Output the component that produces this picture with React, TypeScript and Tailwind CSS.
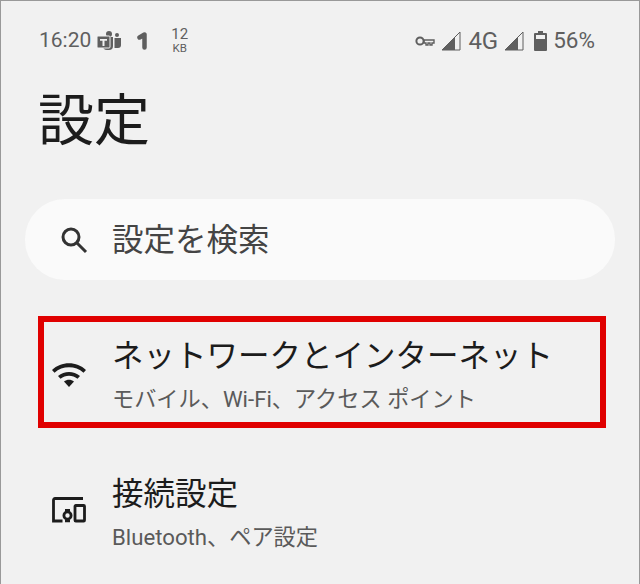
const StatusIcons = () => (
  <div className="flex items-center">
    <svg width="20" height="12" viewBox="0 0 20 12" className="mr-[6px]" fill="none" stroke="#5f5f5f" strokeWidth="2">
      <circle cx="5" cy="6" r="3.6" />
      <path d="M9 5h10v3h-2v2h-2V8h-2v2h-2V8H9z" strokeWidth="1.4" />
    </svg>
    <svg width="20" height="20" viewBox="0 0 20 20" className="mr-[7px]">
      <path d="M19 1v18H1z" fill="none" stroke="#5f5f5f" strokeWidth="1" />
      <path d="M14 6v13H1z" fill="#5f5f5f" />
    </svg>
    <span className="text-[24px] mr-[6px]">4G</span>
    <svg width="20" height="20" viewBox="0 0 20 20" className="mr-[10px]">
      <path d="M19 1v18H1z" fill="none" stroke="#5f5f5f" strokeWidth="1" />
      <path d="M14 6v13H1z" fill="#5f5f5f" />
    </svg>
    <svg width="13" height="20" viewBox="0 0 13 20" className="mr-[6px]">
      <path d="M4 0h5v2h3a1 1 0 0 1 1 1v16a1 1 0 0 1-1 1H1a1 1 0 0 1-1-1V3a1 1 0 0 1 1-1h3z" fill="#5f5f5f" />
      <rect x="2" y="4" width="9" height="4" fill="#f1f1f1" />
    </svg>
    <span className="text-[22.500px]">56%</span>
  </div>
);

const TeamsIcon = () => (
  <svg width="24" height="20" viewBox="0 0 24 20">
    <circle cx="12" cy="3" r="3" fill="#5f5f5f" />
    <circle cx="20" cy="4" r="2" fill="#5f5f5f" />
    <path d="M6 6h10v9a4 4 0 0 1-4 4H10a4 4 0 0 1-4-4z" fill="#5f5f5f" />
    <path d="M17.500 7H24v7a3 3 0 0 1-3 3h-3.500z" fill="#5f5f5f" />
    <rect x="0" y="5" width="13" height="12" rx="1" fill="#5f5f5f" stroke="#f1f1f1" strokeWidth="1" />
    <path d="M3 8h7v1.800H7.500V15h-2V9.800H3z" fill="#f1f1f1" />
  </svg>
);

const OneIcon = () => (
  <svg width="12" height="18" viewBox="0 0 12 18" fill="none" stroke="#5f5f5f" strokeWidth="4.500" strokeLinecap="round" strokeLinejoin="round">
    <path d="M2.500 5.500L7.500 2.500V15.500" />
  </svg>
);

const WifiIcon = () => (
  <svg width="34" height="26" viewBox="0 0 34 26" fill="#1c1c1c" className="mt-[4px]">
    <path d="M0 9C9 0 25 0 34 9l-2.500 2.800C23.500 4.500 10.500 4.500 2.500 11.800z" />
    <path d="M6 15c6.500-5.500 15.500-5.500 22 0l-2.500 2.800c-5-4-12-4-17 0z" />
    <path d="M12 20.500c3-2.300 7-2.300 10 0L17 26z" />
  </svg>
);

const DevicesIcon = () => (
  <svg width="34" height="26" viewBox="0 0 34 26" fill="none" stroke="#1c1c1c" strokeWidth="2.800">
    <path d="M31 1.500H3a1.500 1.500 0 0 0-1.500 1.500v21h9" />
    <rect x="23" y="8.500" width="9.500" height="15.500" rx="0.800" />
    <circle cx="15.500" cy="18.500" r="3.600" />
    <path d="M13 13.500h5M13 23.800h5" />
  </svg>
);

const SearchIcon = () => (
  <svg width="30" height="30" viewBox="0 0 30 30" fill="none" stroke="#333" strokeWidth="3">
    <circle cx="12" cy="12" r="8" />
    <path d="M18 18l9 9" />
  </svg>
);

const Row = ({ icon, title, sub }: { icon: React.ReactNode; title: string; sub: string }) => (
  <div className="flex items-center">
    <div className="w-[34px] mr-[26px] flex justify-center">{icon}</div>
    <div className="flex flex-col pt-[8px]">
      <div className="text-[31.500px] leading-[46px] text-[#1c1c1c] whitespace-nowrap">{title}</div>
      <div className="text-[22.200px] leading-[38px] text-[#5a5a5a] whitespace-nowrap">{sub}</div>
    </div>
  </div>
);

export default function App() {
  return (
    <div
      className="w-[640px] h-[584px] overflow-hidden bg-[#f1f1f1] border-x border-t border-[#999] flex flex-col"
      style={{ fontFamily: '"Roboto", "Noto Sans CJK JP", sans-serif' }}
    >
      {/* status bar */}
      <div className="flex items-center justify-between pl-[38px] pr-[44px] pt-[26px] h-[54px] text-[#5f5f5f]">
        <div className="flex items-center">
          <span className="text-[21px] mr-[6px]">16:20</span>
          <TeamsIcon />
          <div className="ml-[16px] mr-[22px]">
            <OneIcon />
          </div>
          <div className="flex flex-col items-center">
            <span className="text-[15px] leading-[15px]">12</span>
            <span className="text-[11.500px] leading-[13px]">KB</span>
          </div>
        </div>
        <StatusIcons />
      </div>

      <h1 className="text-[56px] leading-[64px] font-normal text-[#1c1c1c] pl-[37px] mt-[34px]">設定</h1>

      {/* search */}
      <div className="mx-[24px] mt-[46px] h-[81px] rounded-[40px] bg-[#fafafa] flex items-center pl-[34px] shrink-0">
        <SearchIcon />
        <span className="ml-[23px] pt-[3px] text-[31.500px] text-[#444]">設定を検索</span>
      </div>

      {/* highlighted row */}
      <div className="ml-[37px] w-[568px] mt-[36px] h-[112px] border-[6px] border-[#e00000] pl-[8px] flex items-center shrink-0">
        <Row icon={<WifiIcon />} title="ネットワークとインターネット" sub="モバイル、Wi-Fi、アクセス ポイント" />
      </div>

      <div className="pl-[51px] mt-[36px]">
        <Row icon={<DevicesIcon />} title="接続設定" sub="Bluetooth、ペア設定" />
      </div>
    </div>
  );
}
